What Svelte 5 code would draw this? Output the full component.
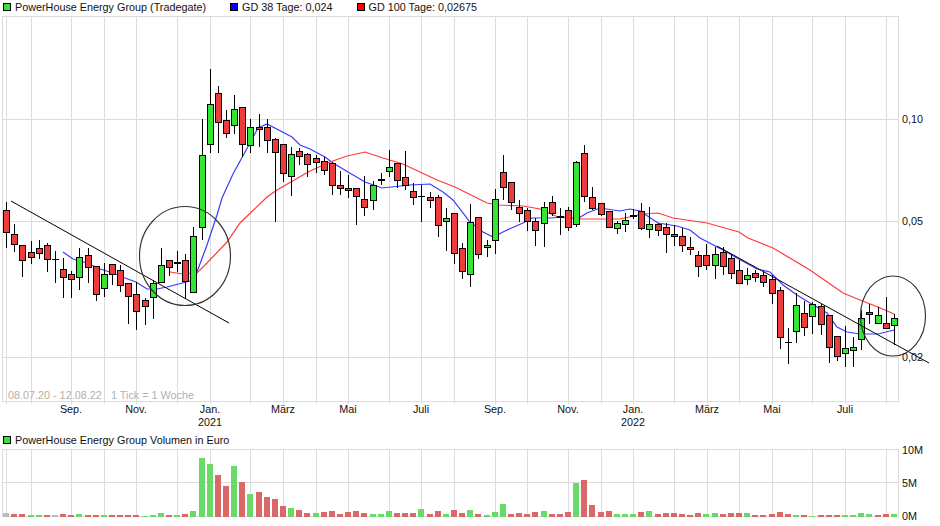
<script lang="ts">
  // candles: body top, body bottom, wick top, wick bottom, colour (pixel values)
  const candles: [number, number, number, number, string][] = [
    [210, 232, 202, 248, "r"], [234, 244, 224, 252, "r"], [245, 260, 245, 277, "r"], [252, 257, 241, 264, "r"],
    [248, 253, 240, 259, "r"], [245, 259, 243, 272, "r"], [259, 259, 251, 283, "d"], [269, 277, 258, 298, "r"],
    [274, 279, 271, 298, "r"], [257, 277, 248, 290, "g"], [255, 267, 248, 283, "r"], [266, 294, 266, 301, "r"],
    [274, 288, 263, 297, "g"], [264, 274, 264, 285, "r"], [270, 285, 265, 292, "r"], [283, 296, 283, 324, "r"],
    [294, 311, 282, 330, "r"], [300, 306, 298, 325, "r"], [283, 297, 280, 319, "g"], [265, 282, 248, 282, "g"],
    [260, 267, 260, 276, "r"], [262, 263, 251, 272, "d"], [260, 281, 254, 299, "r"], [236, 292, 227, 292, "g"],
    [155, 227, 119, 240, "g"], [104, 144, 69, 153, "g"], [93, 122, 86, 153, "r"], [120, 133, 110, 138, "r"],
    [109, 125, 95, 134, "g"], [107, 144, 107, 157, "r"], [127, 145, 119, 153, "g"], [127, 129, 114, 147, "r"],
    [127, 140, 119, 153, "r"], [139, 152, 138, 222, "r"], [144, 173, 144, 182, "r"], [154, 176, 147, 196, "g"],
    [151, 156, 148, 165, "r"], [154, 164, 153, 177, "r"], [158, 162, 155, 173, "r"], [161, 170, 157, 175, "r"],
    [163, 185, 162, 195, "r"], [185, 188, 171, 195, "r"], [188, 190, 175, 198, "r"], [188, 196, 188, 225, "r"],
    [199, 207, 176, 216, "r"], [185, 200, 181, 210, "g"], [179, 180, 173, 185, "g"], [167, 171, 150, 177, "g"],
    [163, 180, 163, 188, "r"], [177, 185, 151, 190, "r"], [191, 197, 183, 205, "r"], [196, 196, 185, 222, "d"],
    [197, 200, 192, 208, "r"], [197, 225, 195, 237, "r"], [218, 221, 208, 251, "g"], [213, 253, 213, 264, "r"],
    [248, 271, 243, 279, "r"], [222, 274, 204, 287, "g"], [217, 254, 217, 259, "r"], [245, 247, 240, 257, "g"],
    [199, 240, 189, 254, "g"], [172, 187, 155, 200, "r"], [182, 202, 182, 210, "r"], [207, 213, 200, 222, "r"],
    [210, 221, 208, 231, "r"], [221, 230, 218, 246, "r"], [207, 223, 202, 247, "g"], [202, 213, 196, 216, "r"],
    [216, 217, 208, 235, "r"], [210, 227, 207, 231, "r"], [162, 224, 161, 227, "g"], [153, 196, 145, 202, "r"],
    [197, 208, 187, 210, "r"], [203, 214, 203, 216, "r"], [211, 227, 211, 228, "r"], [223, 228, 221, 234, "g"],
    [220, 224, 213, 232, "g"], [215, 216, 209, 219, "d"], [211, 228, 203, 230, "r"], [224, 229, 207, 238, "g"],
    [224, 230, 223, 236, "r"], [227, 234, 223, 253, "r"], [234, 236, 225, 246, "r"], [236, 245, 228, 252, "r"],
    [247, 249, 237, 255, "r"], [255, 266, 251, 277, "r"], [255, 265, 244, 270, "r"], [254, 265, 247, 279, "g"],
    [252, 266, 247, 275, "r"], [258, 273, 254, 279, "r"], [270, 283, 260, 284, "r"], [275, 279, 268, 285, "g"],
    [273, 277, 270, 282, "r"], [275, 282, 271, 287, "r"], [279, 293, 275, 304, "r"], [290, 337, 287, 349, "r"],
    [342, 342, 328, 364, "d"], [305, 331, 293, 343, "g"], [313, 327, 301, 336, "r"], [304, 316, 302, 334, "g"],
    [306, 324, 304, 335, "r"], [315, 347, 315, 363, "r"], [336, 356, 336, 361, "r"], [348, 353, 326, 367, "g"],
    [347, 350, 337, 367, "g"], [318, 339, 310, 350, "g"], [312, 314, 304, 324, "r"], [315, 323, 307, 323, "g"],
    [323, 328, 297, 328, "r"], [318, 325, 314, 345, "g"],
  ];

  const volumes = [
    400, 402, 402, 405, 405, 405, 405, 402, 405, 402, 405, 405, 405, 405, 405, 405, 405, 408, 405, 399, 405, 405,
    402, 393, 234, 252, 285, 318, 258, 306, 342, 336, 351, 357, 378, 384, 390, 399, 399, 396, 393, 402, 396, 393,
    399, 402, 402, 393, 399, 399, 399, 387, 402, 393, 402, 390, 399, 390, 402, 405, 396, 372, 402, 399, 402, 396,
    393, 402, 402, 396, 309, 300, 375, 396, 393, 402, 402, 402, 396, 393, 402, 399, 399, 402, 405, 399, 402, 399,
    402, 399, 399, 399, 405, 405, 402, 396, 402, 405, 405, 408, 405, 405, 405, 405, 405, 399, 402, 405, 402, 402,
  ];
  const volumeColors =
    "xrrggrxrrgrrgrrrrgggrgrgggrrgrgrrrrgrr" + "grrrrrrgggrrrgrrgrrgrgggrrrrgrrrgrrrrg" + "g" + "grgrrrrrrggrrrgrrrrrgrgrrrgggg" + "rrg";

  const grid = [6, 31, 71, 104, 136, 177, 210, 250, 283, 316, 348, 389, 421, 454, 495, 527, 568, 601, 633, 674, 707, 739, 772, 812, 845, 886];
  const priceGrid = [119, 221, 357];
  const months = [
    { x: 71, t: "Sep." }, { x: 136, t: "Nov." }, { x: 210, t: "Jan.", y: "2021" }, { x: 283, t: "März" },
    { x: 348, t: "Mai" }, { x: 421, t: "Juli" }, { x: 495, t: "Sep." }, { x: 568, t: "Nov." },
    { x: 633, t: "Jan.", y: "2022" }, { x: 707, t: "März" }, { x: 772, t: "Mai" }, { x: 845, t: "Juli" },
  ];

  const blue =
    "63,252 73,259 87,263 100,269 113,273 125,278 136,282 147,289 157,289 167,287 190,281 197,272 207,245 217,215 222,198 233,174 250,143 258,128 267,124 292,137 300,145 310,149 325,157 333,163 348,172 365,182 382,188 410,185 430,184 443,192 453,200 470,222 483,232 493,237 505,231 523,223 532,218 550,218 567,217 577,219 587,213 600,208 620,211 630,209 640,211 658,223 677,226 690,230 700,238 723,250 737,258 757,269 770,272 783,285 797,295 810,303 827,313 837,327 847,332 860,334 878,334 894,330";
  const red =
    "170,272 183,274 197,273 207,263 227,242 240,223 267,197 277,190 303,175 310,171 330,162 347,156 365,152 383,158 403,164 437,180 455,187 487,203 498,205 523,206 540,209 558,217 577,219 620,219 643,214 658,213 673,218 707,223 739,232 748,238 773,248 810,270 843,293 860,300 878,307 894,314";

  const xAt = (i: number) => Math.floor(6.7 + 8.143 * i) + 0.5;
  const fills: Record<string, string> = { r: "#ee3c3c", g: "#33e633", d: "#000" };
  const volFills: Record<string, string> = { r: "#da6868", g: "#68da68", x: "#bbb" };
</script>

<div class="chart">
  <div class="legend">
    <span class="item"><i class="box green"></i>PowerHouse Energy Group (Tradegate)</span>
    <span class="item"><i class="box blue"></i>GD 38 Tage: 0,024</span>
    <span class="item"><i class="box red"></i>GD 100 Tage: 0,02675</span>
  </div>

  <svg class="price" width="940" height="417" viewBox="0 16 940 417">
    <g class="grid">
      <rect x="2.5" y="16.5" width="896" height="385" />
      {#each priceGrid as y}
        <line x1="2" x2="899" y1={y + 0.5} y2={y + 0.5} />
      {/each}
      {#each grid as x}
        <line x1={x + 0.5} x2={x + 0.5} y1="16" y2="404" />
      {/each}
    </g>

    <polyline class="ma" stroke="#3a3aff" points={blue} />
    <polyline class="ma" stroke="#ff3a3a" points={red} />

    {#each candles as [top, bottom, high, low, c], i}
      <g class="candle">
        <line x1={xAt(i)} x2={xAt(i)} y1={high} y2={low} />
        {#if top === bottom}
          <line x1={xAt(i) - 3.5} x2={xAt(i) + 3.5} y1={top + 0.5} y2={top + 0.5} />
        {:else}
          <rect x={xAt(i) - 3} y={top + 0.5} width="6" height={bottom - top} fill={fills[c]} />
        {/if}
      </g>
    {/each}

    <line class="trend" x1="11" y1="201" x2="229" y2="323" />
    <line class="trend" x1="717" y1="246" x2="929" y2="363" />
    <ellipse class="mark" cx="185" cy="256" rx="45.5" ry="49.5" />
    <ellipse class="mark" cx="893" cy="316" rx="32.5" ry="40" />

    <text class="range" x="8" y="399">08.07.20 - 12.08.22</text>
    <text class="tick" x="111" y="399">1 Tick = 1 Woche</text>

    {#each months as m}
      <text class="label" x={m.x} y="413" text-anchor="middle">{m.t}</text>
      {#if m.y}
        <text class="label" x={m.x} y="426" text-anchor="middle">{m.y}</text>
      {/if}
    {/each}
    <text class="label" x="902" y="123">0,10</text>
    <text class="label" x="902" y="225">0,05</text>
    <text class="label" x="902" y="361">0,02</text>
  </svg>

  <div class="legend compact">
    <span class="item"><i class="box green"></i>PowerHouse Energy Group Volumen in Euro</span>
  </div>

  <svg class="volume" width="940" height="81" viewBox="0 445 940 81">
    <g class="grid">
      <rect x="2.5" y="449.5" width="896" height="67" />
      <line x1="2" x2="899" y1="482.5" y2="482.5" />
      {#each grid as x}
        <line x1={x + 0.5} x2={x + 0.5} y1="449" y2="517" />
      {/each}
    </g>
    {#each volumes as top, i}
      <rect class="bar" x={xAt(i) - 3.5} y={380 + top / 3} width="6" height={(410 - top) / 3} fill={volFills[volumeColors[i]]} />
    {/each}
    <text class="label" x="902" y="454">10M</text>
    <text class="label" x="902" y="487">5M</text>
    <text class="label" x="902" y="520">0M</text>
  </svg>
</div>

<style>
  :global(body) {
    background: #fff;
  }
  .chart {
    width: 940px;
    height: 526px;
    overflow: hidden;
    font-family: "Liberation Sans", Arial, sans-serif;
    font-size: 10.8px;
    color: #111;
  }
  .legend {
    display: flex;
    gap: 24px;
    height: 10px;
    padding: 3px 0 3px 3px;
    line-height: 9px;
  }
  .legend.compact {
    height: 9px;
    padding-bottom: 0;
  }
  .item {
    display: flex;
    align-items: flex-start;
    gap: 4px;
    white-space: nowrap;
  }
  .box {
    width: 6px;
    height: 6px;
    border: 1px solid #000;
    flex: none;
  }
  .green { background: #33e633; }
  .blue { background: #0000ff; }
  .red { background: #ff0000; }
  svg {
    display: block;
  }
  .grid rect,
  .grid line {
    fill: none;
    stroke: #dcdcdc;
    stroke-width: 1;
    shape-rendering: crispEdges;
  }
  .ma {
    fill: none;
    stroke-width: 1.2;
  }
  .candle line,
  .candle rect {
    stroke: #000;
    stroke-width: 1;
    shape-rendering: crispEdges;
  }
  .trend {
    stroke: #000;
    stroke-width: 1;
  }
  .mark {
    fill: none;
    stroke: #333;
    stroke-width: 1.15;
  }
  .bar {
    shape-rendering: crispEdges;
  }
  .label {
    font-size: 10.8px;
    fill: #111;
  }
  .range {
    font-size: 10.8px;
    fill: #b8aea6;
  }
  .tick {
    font-size: 10.8px;
    fill: #aeb2ba;
  }
</style>
